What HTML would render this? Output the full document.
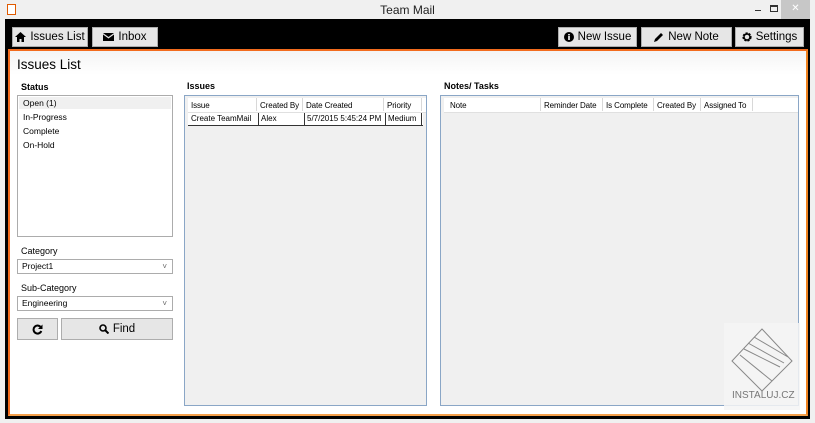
<!DOCTYPE html>
<html><head><style>
*{margin:0;padding:0;box-sizing:border-box}
body{width:815px;height:423px;background:#f0f0f0;font-family:"Liberation Sans",sans-serif;position:relative;overflow:hidden;color:#000}
.a{position:absolute}
.btn{position:absolute;background:#e6e6e6;border:1px solid #adadad;font-size:11.5px;display:flex;align-items:center;justify-content:center;gap:4px}
.t{font-size:9px;position:absolute}
.grid{position:absolute;background:#f0f0f0;border:1px solid #8aa6c6}
.hdr{position:absolute;left:3px;top:2px;height:15px;background:#fff;border-bottom:1px solid #e0e0e0;font-size:8px;letter-spacing:-0.1px}
.hdr span{position:absolute;border-right:1px solid #d8d8d8;height:13px;padding-left:3px;top:0;line-height:15px;white-space:nowrap;overflow:hidden}
.combo{position:absolute;left:17px;width:156px;height:15px;background:#fff;border:1px solid #acacac;font-size:8.5px;padding-left:4px;line-height:13px}
.combo:after{content:"˅";position:absolute;right:5px;top:0;font-size:8px;color:#666}
</style></head><body>
<div class="a" style="left:7px;top:4px;width:9px;height:11px;border:1px solid #e05a00;background:#fff"></div>
<div class="a" style="left:0;width:815px;top:3px;text-align:center;font-size:12px;color:#222">Team Mail</div>
<div class="a" style="left:755px;top:10px;width:6px;height:1px;background:#333"></div>
<div class="a" style="left:770px;top:5px;width:8px;height:7px;border:1px solid #333;border-top-width:2px"></div>
<div class="a" style="left:781px;top:0;width:29px;height:19px;background:#c7c7c7;color:#fff;font-size:10px;text-align:center;line-height:18px">✕</div>
<div class="a" style="left:5px;top:19px;width:805px;height:400px;background:#000"></div>
<div class="btn" style="left:12px;top:27px;width:76px;height:20px"><svg width="11" height="10" viewBox="0 0 11 10"><path d="M0 5L5.5 0L11 5H9V10H6.5V7H4.5V10H2V5Z" fill="#000"/></svg>Issues List</div>
<div class="btn" style="left:92px;top:27px;width:66px;height:20px"><svg width="11" height="8" viewBox="0 0 11 8"><path d="M0 0H11L5.5 4Z M0 1.5L5.5 5.5L11 1.5V8H0Z" fill="#000"/></svg>Inbox</div>
<div class="btn" style="left:558px;top:27px;width:79px;height:20px"><svg width="10" height="10"><circle cx="5" cy="5" r="5" fill="#000"/><rect x="4.2" y="4" width="1.6" height="4" fill="#fff"/><rect x="4.2" y="2" width="1.6" height="1.4" fill="#fff"/></svg>New Issue</div>
<div class="btn" style="left:641px;top:27px;width:91px;height:20px"><svg width="10" height="10"><path d="M0 10L1 7L7 1L9 3L3 9Z" fill="#000"/></svg>New Note</div>
<div class="btn" style="left:735px;top:27px;width:69px;height:20px"><svg width="10" height="10"><circle cx="5" cy="5" r="3.5" fill="none" stroke="#000" stroke-width="2.2" stroke-dasharray="2 1"/><circle cx="5" cy="5" r="3" fill="none" stroke="#000" stroke-width="1.4"/></svg>Settings</div>
<div class="a" style="left:8px;top:49px;width:800px;height:367px;border:2px solid #f26b1d;border-bottom-color:#f5a04a;border-right-color:#f0831f;background:#fff"></div>
<div class="a" style="left:10px;top:51px;width:796px;height:24px;background:linear-gradient(#f4f4f4,#fff)"></div>
<div class="a" style="left:17px;top:57px;font-size:13.5px">Issues List</div>
<div class="t" style="left:21px;top:82px;font-weight:bold">Status</div>
<div class="a" style="left:17px;top:95px;width:156px;height:142px;border:1px solid #acacac;background:#fff;font-size:8.5px">
<div style="background:#f0f0f0;margin:1px;height:12px;padding-left:4px;line-height:12px">Open (1)</div>
<div style="padding-left:5px;line-height:14px">In-Progress<br>Complete<br>On-Hold</div></div>
<div class="t" style="left:21px;top:246px">Category</div>
<div class="combo" style="top:259px">Project1</div>
<div class="t" style="left:21px;top:283px">Sub-Category</div>
<div class="combo" style="top:296px">Engineering</div>
<div class="btn" style="left:17px;top:318px;width:41px;height:22px"><svg width="11" height="11" viewBox="0 0 11 11"><path d="M9 3.5A4 4 0 1 0 9.3 7" fill="none" stroke="#000" stroke-width="2"/><path d="M10.5 0.5V5H6Z" fill="#000"/></svg></div>
<div class="btn" style="left:61px;top:318px;width:112px;height:22px"><svg width="10" height="10"><circle cx="4" cy="4" r="3" fill="none" stroke="#000" stroke-width="1.6"/><path d="M6 6L9.5 9.5" stroke="#000" stroke-width="2"/></svg>Find</div>
<div class="t" style="left:187px;top:81px;font-weight:bold">Issues</div>
<div class="grid" style="left:184px;top:95px;width:243px;height:311px">
<div class="hdr" style="width:238px"><span style="left:0;width:69px">Issue</span><span style="left:69px;width:46px">Created By</span><span style="left:115px;width:81px">Date Created</span><span style="left:196px;width:38px">Priority</span></div>
<div class="a" style="left:3px;top:17px;width:235px;height:13px;background:#fff;border-bottom:1px solid #333;font-size:8px;line-height:12px;white-space:nowrap">
<span class="a" style="left:3px">Create TeamMail</span><span class="a" style="left:70px;border-left:1px solid #333;padding-left:2px">Alex</span><span class="a" style="left:116px;border-left:1px solid #333;padding-left:2px">5/7/2015 5:45:24 PM</span><span class="a" style="left:197px;border-left:1px solid #333;padding-left:2px;border-right:1px solid #333;width:37px">Medium</span></div></div>
<div class="t" style="left:444px;top:81px;font-weight:bold">Notes/ Tasks</div>
<div class="grid" style="left:440px;top:95px;width:359px;height:311px">
<div class="hdr" style="width:354px"><span style="left:3px;width:94px">Note</span><span style="left:97px;width:62px">Reminder Date</span><span style="left:159px;width:51px">Is Complete</span><span style="left:210px;width:47px">Created By</span><span style="left:257px;width:52px">Assigned To</span></div></div>
<div class="a" style="left:724px;top:323px;width:76px;height:87px;background:rgba(245,245,245,.85)">
<svg width="76" height="70" viewBox="0 0 76 70" fill="none" stroke="#888" stroke-width="1"><path d="M8 38 L38 6 L68 38 L38 68 Z M20 26 L56 44 M24 20 L60 40 M30 14 L64 34 M16 32 L48 58"/></svg>
<div class="a" style="left:8px;top:67px;font-size:10px;color:#777">INSTALUJ.CZ</div></div>
</body></html>
